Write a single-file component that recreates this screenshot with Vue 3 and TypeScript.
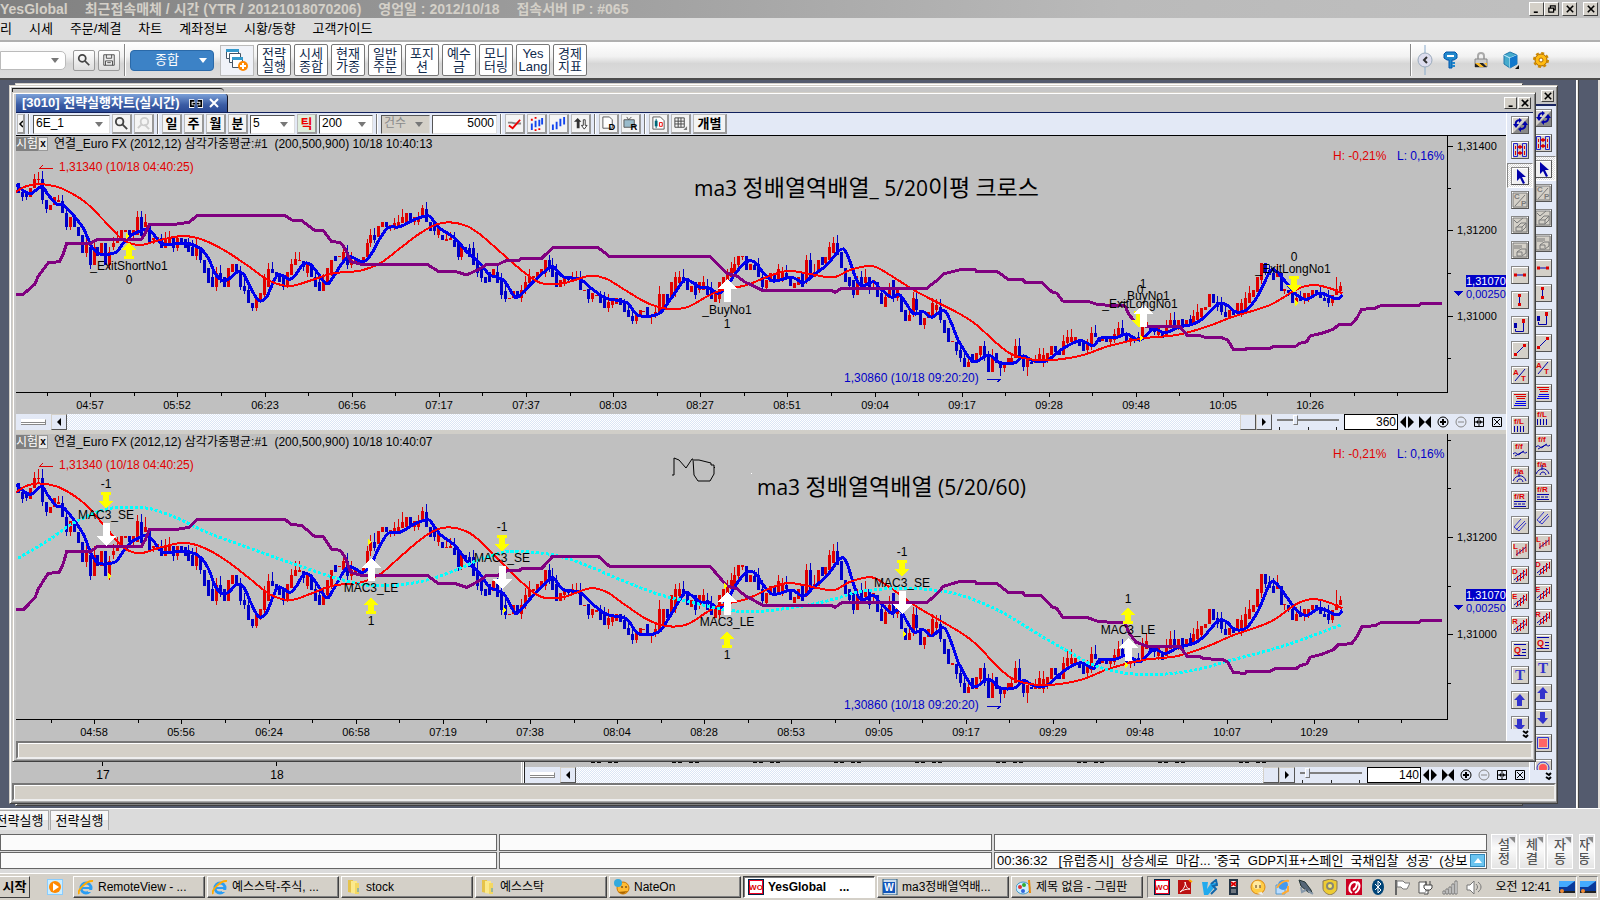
<script setup lang="ts">
import { ref } from 'vue'

type Pt = [number, number]

/* Traces are stored in thirds of a pixel, one row per 480px sheet of the chart. */
const SHEET = 1440
function trace(...sheets: string[]): Pt[] {
  const out: Pt[] = []
  sheets.forEach((s, n) => {
    for (const pair of s.trim().split(/\s+/)) {
      const [x, y] = pair.split(',').map(Number)
      out.push([x + n * SHEET, y])
    }
  })
  return out
}

const fast = trace(
  '48,315 75,335 95,340 125,320 145,345 170,372 190,375 215,400 250,445 275,500 300,522 345,518 370,490 395,465 415,455 440,447 460,462 490,492 560,490 600,505 625,535 645,580 665,600 685,598 710,577 730,582 750,620 770,655 782,663 800,650 830,588 850,588 870,598 890,580 910,552 930,552 950,575 980,612 1000,590 1030,545 1050,530 1090,545 1115,520 1140,475 1165,443 1200,440 1240,420 1275,408 1290,410 1320,445 1365,475 1400,515 1430,540',
  '5,555 30,585 70,600 100,645 115,650 160,605 200,570 220,560 250,590 300,598 340,630 380,655 440,668 475,706 535,702 570,660 610,603 630,603 660,622 690,625 715,640 740,620 770,575 800,545 825,547 850,578 880,603 935,592 970,608 1000,585 1040,555 1080,510 1100,520 1130,600 1150,617 1180,605 1200,625 1235,652 1260,645 1300,700 1330,695 1355,712 1390,690 1410,720 1430,770',
  '0,790 40,845 85,825 120,848 165,848 190,828 220,842 260,842 310,805 360,782 400,797 420,775 470,772 500,762 540,780 580,747 615,758 655,742 700,732 730,715 775,672 800,675 825,695 860,690 895,645 930,575 950,575 980,610 1010,645 1040,658 1080,640 1130,657 1147,645',
)
const slow = trace(
  '48,335 75,320 115,312 170,320 215,340 260,370 320,430 370,480 420,495 480,480 550,468 610,480 680,515 750,562 810,603 870,618 930,602 1000,580 1080,572 1140,550 1200,505 1260,460 1310,433 1350,427 1400,438',
  '0,463 60,515 130,575 185,610 250,610 330,587 380,597 430,627 500,668 560,686 620,682 680,650 720,632 800,615 870,587 925,573 990,582 1060,592 1110,570 1175,558 1230,585 1310,635',
  '0,702 50,735 110,790 160,825 230,840 300,838 370,825 450,797 550,775 650,765 740,740 820,710 930,675 1010,628 1060,615 1110,625 1147,640',
)
const band = trace(
  '48,643 70,643 105,612 115,588 145,548 178,545 190,522 200,490 272,490 292,478 424,478 436,460 448,433 525,433 568,427 590,407 856,407 875,420 905,422 945,452 970,452 995,485 1020,487 1035,505 1052,545 1080,552 1280,552 1315,574 1365,574 1400,585',
  '0,566 20,553 55,553 80,541 118,541 125,535 185,535 218,503 355,503 388,529 690,529 740,580 770,588 795,606 850,632 1055,632 1065,637 1085,625 1340,625 1375,598 1390,582',
  '0,569 45,569 50,575 112,575 145,598 188,598 195,607 245,607 275,635 290,640 308,663 380,663 415,674 495,678 508,705 528,728 565,740 660,740 682,766 720,767 735,772 785,773 803,780 820,808 855,810 860,805 930,805 945,798 1008,798 1020,790 1040,785 1050,768 1085,760 1120,748 1135,735 1175,732 1190,715 1205,688 1245,685 1262,677 1375,677 1385,670 1447,670',
)
const long60 = trace(
  '55,415 100,388 150,358 215,312 290,277 345,263 430,263 480,275 540,298 620,337 720,374 830,414 900,438 1000,472 1080,492 1140,498 1220,492 1300,475 1380,445',
  '0,418 60,400 100,394 190,400 260,415 330,440 440,487 540,524 640,548 740,570 820,575 900,568 990,554 1060,538 1130,517 1200,508 1280,505 1360,510',
  '0,525 80,555 150,590 230,640 320,692 400,735 480,757 560,764 640,760 720,747 800,724 900,698 1000,668 1147,613',
)

/* Candle bodies: direction, top, bottom. */
const bodies = `b310,338 b335,352 b335,350 r325,352 r297,325 r297,300 b297,360 b360,388 r375,390 r350,375 r360,365 b362,400 b400,440 r410,440 b415,440 b440,468 b465,518 r490,518 b500,555 r500,555 b500,528 r488,528 b490,555 r515,555 r490,500 r475,490 r450,475 r450,455 b450,465 r450,465 r410,465 b412,468 r425,440 b438,490 r475,480 r470,478 b475,503 r475,503 r475,490 b475,503 r475,503 b475,490 b478,503 b490,515 b500,528 r502,528 b502,540 b540,580 b565,608 b590,620 r578,620 b578,600 b590,620 r565,620 r552,575 b552,580 b575,620 b618,632 b630,670 b668,685 r655,685 r640,657 r595,645 r567,620 b567,580 b575,585 b580,605 b590,620 r575,615 r553,585 r538,555 r540,543 b542,560 r550,580 b555,592 b590,620 b605,632 r605,632 r565,605 r540,580 b527,543 r528,530 r515,540 b515,555 r540,555 r540,550 b540,553 r530,545 r490,530 r465,490 b465,480 r437,470 r427,440 b425,440 r435,440 r430,440 r425,440 r412,430 r400,425 b400,425 r410,425 r410,425 r385,410 b388,425 b425,452 b425,452 r440,465 b465,480 r478,482 r475,480 b480,500 b490,530 r500,530 b500,515 b505,530 b505,555 b540,580
b565,595 b590,608 b575,605 r567,595 b575,610 b600,645 b632,658 r655,658 r632,655 b632,650 r630,655 r605,632 r590,610 r588,595 r577,595 r567,585 r540,580 b540,568 b555,592 b575,620 r600,620 r590,605 b590,600 r590,600 r592,600 b595,630 r630,632 b628,657 r640,657 r645,648 b648,670 b655,683 r665,683 r660,675 r655,672 b655,675 b670,695 b690,710 b707,722 r705,722 r690,710 r693,697 b680,705 r706,710 r695,705 r642,700 r642,680 b642,665 r605,655 r590,640 r590,608 b590,608 b595,630 r618,635 b605,645 r605,630 r605,630 b618,645 b630,657 r640,665 r605,657 r590,620 r580,600 r565,590 r553,580 r527,555 r527,530 b528,570 r553,570 b555,570 b553,592 b590,620 r600,625 r580,605 b580,605 r567,605 r578,595 b578,590 b592,617 r610,625 r590,615 b580,620 r540,600 b540,590 r575,590 r540,580 b530,555 r530,550 r500,540 r490,520 b490,525 b515,565 b565,605 b590,618 b600,645 r605,645 b592,620 r592,610 b590,630 r600,610 b605,650 b640,672 r650,680 r630,655 b600,655 r630,655 b655,695 b690,722 r705,722 r655,700 b657,690 b690,735 r715,735 r695,715 r668,710 r675,690 b680,720 b720,760 b745,785 r783,787 b785,812
b810,835 b835,862 r845,862 b822,850 r820,850 r797,825 b797,835 b830,875 r830,875 b820,850 b845,865 r850,865 r835,850 r835,850 r797,835 b797,840 b835,862 r840,862 b845,852 r840,850 r822,850 r825,850 r820,840 r797,825 b797,815 b810,825 r782,825 r770,790 r770,785 r770,785 b782,797 b785,812 r790,810 r760,800 b758,772 b770,785 r770,782 b772,785 r770,785 r762,780 r745,770 b745,765 b762,785 r775,785 b770,780 b770,782 r735,775 r725,745 b735,750 b735,755 r740,765 b755,775 r735,765 r720,745 b720,740 r720,740 b718,745 r720,740 b718,735 r708,735 r695,720 r685,710 r680,690 r642,680 b642,670 b665,680 b670,695 b695,710 r690,710 b690,705 r668,695 r670,700 r655,690 r640,668 r630,650 r590,635 r550,600 b550,575 b570,585 b580,600 r575,590 b580,632 r628,632 b630,640 b640,670 r655,672 b655,662 r640,660 r640,655 r630,645 b630,640 b635,655 b655,662 b655,670 r645,670 r628,645 r618,632`

const wickFix: Record<number, Pt> = {
  5: [275, 310], 18: [500, 566], 59: [668, 692], 60: [655, 692], 70: [516, 555], 102: [375, 410],
  160: [706, 731], 207: [466, 525], 229: [715, 746], 248: [845, 887], 255: [840, 887], 334: [606, 632], 333: [591, 645],
}
const candles = bodies.trim().split(/\s+/).map((t, i) => {
  const [top, bottom] = t.slice(1).split(',').map(Number)
  const up = (i * 7919) % 13
  const down = (i * 104729) % 11
  const fix = wickFix[i]
  return {
    up: t[0] === 'r', x: 55 + i * 11.87, top, bottom,
    high: fix ? fix[0] : top - (up > 6 ? up * 2 : 0),
    low: fix ? fix[1] : bottom + (down > 6 ? down + 2 : 0),
  }
})

interface Signal { kind: 'up' | 'down' | 'buy' | 'sell' | 'mark'; x: number; y: number }
interface Note { x: number; y: number; s: string }
interface Chart {
  id: number; top: number; height: number; base: number; axis: number; scale: number; stamp: string; tick0: number
  times: string[]; prices: [number, string][]; badge: number; hl: number; high: number; low: number
  signals: Signal[]; notes: Note[]; dotted: boolean
}

const charts: Chart[] = [
  {
    id: 1, top: 136, height: 278, base: 80, axis: 392, scale: 1, stamp: '10:40:13', tick0: 271, dotted: false,
    times: ['04:57', '05:52', '06:23', '06:56', '07:17', '07:37', '08:03', '08:27', '08:51', '09:04', '09:17', '09:28', '09:48', '10:05', '10:26'],
    prices: [[146, '1,31400'], [188, ''], [230, '1,31200'], [273, ''], [316, '1,31000'], [358, '']],
    badge: 275, hl: 160, high: 168, low: 379,
    signals: [
      { kind: 'up', x: 129, y: 242 }, { kind: 'buy', x: 727, y: 279 },
      { kind: 'down', x: 1139, y: 311 }, { kind: 'buy', x: 1143, y: 304 },
      { kind: 'down', x: 1294, y: 276 }, { kind: 'mark', x: 1296, y: 303 }, { kind: 'mark', x: 127, y: 236 }, { kind: 'mark', x: 1141, y: 338 },
    ],
    notes: [
      { x: 129, y: 270, s: '_ExitShortNo1' }, { x: 129, y: 284, s: '0' },
      { x: 727, y: 314, s: '_BuyNo1' }, { x: 727, y: 328, s: '1' },
      { x: 1143, y: 288, s: '1' }, { x: 1140, y: 294, s: '0' }, { x: 1145, y: 300, s: '_BuyNo1' }, { x: 1140, y: 308, s: '_ExitLongNo1' },
      { x: 1294, y: 261, s: '0' }, { x: 1293, y: 273, s: '_ExitLongNo1' },
    ],
  },
  {
    id: 2, top: 434, height: 307, base: 420, axis: 719, scale: 1.144, stamp: '10:40:07', tick0: 283, dotted: true,
    times: ['04:58', '05:56', '06:24', '06:58', '07:19', '07:38', '08:04', '08:28', '08:53', '09:05', '09:17', '09:29', '09:48', '10:07', '10:29'],
    prices: [[440, ''], [488, ''], [537, '1,31200'], [586, ''], [634, '1,31000'], [683, '']],
    badge: 589, hl: 458, high: 466, low: 706,
    signals: [
      { kind: 'down', x: 106, y: 492 }, { kind: 'sell', x: 106, y: 523 }, { kind: 'mark', x: 109, y: 576 },
      { kind: 'buy', x: 371, y: 558 }, { kind: 'up', x: 371, y: 597 }, { kind: 'mark', x: 369, y: 542 },
      { kind: 'down', x: 502, y: 535 }, { kind: 'sell', x: 502, y: 566 }, { kind: 'mark', x: 504, y: 610 },
      { kind: 'buy', x: 727, y: 592 }, { kind: 'up', x: 727, y: 631 }, { kind: 'mark', x: 725, y: 586 },
      { kind: 'down', x: 902, y: 560 }, { kind: 'sell', x: 902, y: 591 }, { kind: 'mark', x: 904, y: 634 },
      { kind: 'up', x: 1128, y: 607 }, { kind: 'buy', x: 1128, y: 638 }, { kind: 'mark', x: 1126, y: 665 },
    ],
    notes: [
      { x: 106, y: 488, s: '-1' }, { x: 106, y: 519, s: 'MAC3_SE' },
      { x: 371, y: 592, s: 'MAC3_LE' }, { x: 371, y: 625, s: '1' },
      { x: 502, y: 531, s: '-1' }, { x: 502, y: 562, s: 'MAC3_SE' },
      { x: 727, y: 626, s: 'MAC3_LE' }, { x: 727, y: 659, s: '1' },
      { x: 902, y: 556, s: '-1' }, { x: 902, y: 587, s: 'MAC3_SE' },
      { x: 1128, y: 603, s: '1' }, { x: 1128, y: 634, s: 'MAC3_LE' },
    ],
  },
]

const shapes: Record<Signal['kind'], string> = {
  up: 'M0 0l7 8h-4v6h2v3h-10v-3h2v-6h-4z',
  down: 'M0 17l7-8h-4v-6h2v-3h-10v3h2v6h-4z',
  buy: 'M0 0l10 10h-6v13h-7v-13h-6z',
  sell: 'M0 23l10-10h-6v-13h-7v13h-6z',
  mark: 'M-1 -3l4 3l-4 3z',
}

const py = (c: Chart, y: number) => (c.scale === 1 ? c.base + y / 3 : c.base + (148 + (y - 275) * c.scale) / 3)
const r1 = (n: number) => Math.round(n * 10) / 10
function place(c: Chart, pts: Pt[]): Pt[] {
  return pts.map(([x, y]) => [x / 3, py(c, y)])
}
const straight = (pts: Pt[]) => 'M' + pts.map(([x, y]) => `${r1(x)} ${r1(y)}`).join('L')
function smooth(p: Pt[]): string {
  let d = `M${r1(p[0][0])} ${r1(p[0][1])}`
  for (let i = 0; i < p.length - 1; i++) {
    const a = p[Math.max(0, i - 1)], b = p[i], c = p[i + 1], e = p[Math.min(p.length - 1, i + 2)]
    d += `C${r1(b[0] + (c[0] - a[0]) / 6)} ${r1(b[1] + (c[1] - a[1]) / 6)} ${r1(c[0] - (e[0] - b[0]) / 6)} ${r1(c[1] - (e[1] - b[1]) / 6)} ${r1(c[0])} ${r1(c[1])}`
  }
  return d
}
function bars(c: Chart, up: boolean): string {
  return candles.filter((k) => k.up === up).map((k) => {
    const x = Math.round(k.x / 3), t = Math.round(py(c, k.top)), b = Math.max(t + 1, Math.round(py(c, k.bottom)))
    return `M${x - 1} ${t}h3v${b - t}h-3zM${x} ${Math.round(py(c, k.high))}h1V${Math.round(py(c, k.low))}h-1z`
  }).join('')
}
function ticks(c: Chart): string {
  let d = ''
  for (let i = -1; i < 31; i++) {
    const x = Math.round((c.tick0 + i * 130.7) / 3)
    if (x < 1440) d += `M${x} ${c.axis}h1v${i % 2 === 0 && i < 29 ? 5 : 4}h-1z`
  }
  return d
}
const sixty = smooth(long60.map(([x, y]) => [x / 3, 420 + y / 3] as Pt))

const R = '#d00', B = '#00a', G = '#7a7a7a'
const tx = (x: number, y: number, s: string, c: string, z = 8) =>
  `<text x="${x}" y="${y}" fill="${c}" font-size="${z}" font-weight="700">${s}</text>`
const ln = (d: string, c: string, w = 1) => `<path d="${d}" fill="none" stroke="${c}" stroke-width="${w}"/>`
const fl = (d: string, c: string) => `<path d="${d}" fill="${c}"/>`
const hatch = (s: string) => ln('M2 13l11-9M4 15l11-9', B) + ln('M5.500 14v-5M8.500 14v-8M11.500 12v-9M14.500 9v-7', R) + tx(0, 7, s, R, 8)

const tools: { name: string; art: string; on?: boolean }[] = [
  { name: '새로고침', art: fl('M16 1v15H1z', '#888') + ln('M4 8c-1-3 1-5 4-5M9 12c3 0 5-2 4-5', B, 2) + fl('M1 7h6l-3 4zM10 8h6l-3-4zM7 1v5l3-3zM9 10v5l-3-3z', B) },
  { name: '블록', art: ln('M1.5 1.5h4v13h-4zM10.500 1.5h4v13h-4z', '#22c') + ln('M3.500 4v3M3.500 9v4M12.500 4v3M12.500 9v4', R) + fl('M5 5l3-2v4zM11 5l-3-2v4zM5 11l3-2v4zM11 11l-3-2v4z', R) },
  { name: '선택', art: fl('M5 1v12l3-3l3 6l2-1l-3-6h4z', B), on: true },
  { name: '복사', art: ln('M1 1h14v14h-14z', G) + tx(2, 7, 'C', G, 8) + tx(9, 14, 'P', G, 8) + ln('M3 14l10-11', G) },
  { name: '선택 삭제', art: ln('M1 1h14v14h-14z', G) + ln('M2 3l3 3l6-5M5 10l4-4h5v4l-4 4h-6v-4h6v4M10 10l4-4', G) },
  { name: '전체 삭제', art: ln('M1 1h14v14h-14z', G) + ln('M3 3v4M5 3v4M7 3v4M9 3v3M5 10l4-3h5v4l-4 3h-5v-4h5v3', G) },
  { name: '수평선', art: ln('M4 8h8', B) + fl('M2 6.500h3v3h-3zM11 6.500h3v3h-3z', R) },
  { name: '수직선', art: ln('M7.500 4v8', B) + fl('M6 2h3v3h-3zM6 11h3v3h-3z', R) },
  { name: '직각선', art: ln('M3.500 12v2.500h8v-12', B) + fl('M2 6h3v5h-3z', B) + fl('M10 2h3v4h-3z', R) },
  { name: '추세선', art: ln('M4 12l8-8', B) + fl('M2 11h3v3h-3zM11 2h3v3h-3z', R) },
  { name: '각도선', art: ln('M3 14l10-12', B) + tx(1, 8, 'A', R, 8) + tx(9, 14, 'T', R, 8) },
  { name: '되돌림', art: ln('M2 2.500h12M4 4.500h10M5 6.500h8', R) + ln('M4 9.500h10M3 11.500h11M2 13.500h12', '#00e') },
  { name: '피보나치선', art: tx(2, 7, 'f/L', R, 8) + ln('M2.500 9v6M5.500 9v6M8.500 9v6M11.500 9v6', B) },
  { name: '피보나치팬', art: tx(3, 7, 'f/f', R, 8) + ln('M1 12c4-4 4 4 8-1c3-3 3 2 6-1M3 14l9-5', B) },
  { name: '피보나치원', art: tx(2, 7, 'f/a', R, 8) + ln('M1 14c3-7 11-7 13 0M5 15c1-4 5-4 6 0M7 5v5', B) },
  { name: '피보나치구간', art: tx(2, 7, 'f/R', R, 8) + ln('M2 9.500h12M2 14.500h12', B) + '<path d="M2 12h12" stroke="#00a" stroke-dasharray="3 1"/>' },
  { name: '평행선', art: ln('M2 10l7-8M4 13l9-9M7 14l7-8M2 10l5 4', '#33c') },
  { name: '회귀선', art: tx(1, 7, 'L', R, 8) + ln('M4 13l10-8', B) + ln('M5 14v-6M8 12v-5M11 11v-6M14 10v-8', R) },
  { name: '회귀 D', art: hatch('D') },
  { name: '회귀 E', art: hatch('E') },
  { name: '회귀 R', art: hatch('R') },
  { name: '사분선', art: ln('M2 2.500h12M2 13.500h12M10 7.500h4M10 10.500h4', B) + tx(2, 11, 'Q', R, 9) },
  { name: '문자', art: '<text x="8" y="13" text-anchor="middle" fill="#33c" style="font-family:Liberation Serif" font-size="15" font-weight="700">T</text>' },
  { name: '위 화살표', art: fl('M8 2l5 6h-3v6h-5v-6h-3z', '#33c') },
  { name: '아래 화살표', art: fl('M8 14l5-6h-3v-6h-5v6h-3z', '#33c') },
  { name: '사각형', art: '<path d="M2.500 2.500h11v11h-11z" fill="none" stroke="#33c"/><path d="M4 4h8v8h-8z" fill="#f66"/>' },
  { name: '원', art: '<circle cx="8" cy="8" r="6" fill="none" stroke="#33c"/><circle cx="8" cy="8" r="4" fill="#f55"/>' },
]

const art: Record<string, string> = {
  glass: '<circle cx="6" cy="6" r="4" fill="none" stroke="#444" stroke-width="2"/><path d="M9 9l5 5" stroke="#444" stroke-width="2"/>',
  glassOff: '<circle cx="9" cy="6" r="4" fill="none" stroke="#ccc" stroke-width="2"/><path d="M6 9l-4 4M9 9l5 5" stroke="#ccc" stroke-width="2"/>',
  save: '<path d="M2 2h12v12h-12z" fill="#eee" stroke="#444"/><path d="M5 2v4h6v-4M4 14v-5h8v5M6 11h4" fill="none" stroke="#444"/>',
  check: '<path d="M1 7h4l4 1h6" stroke="#888" fill="none" stroke-width="2"/><path d="M2 10l4 3l8-9" stroke="#e00" fill="none" stroke-width="2"/>',
  dots: '<path d="M3 15v-7M7 12v-7M11 11v-7M14 9v-7" stroke="#14e" stroke-width="2"/><path d="M2 3h2v2h-2zM6 1h2v2h-2zM6 14h2v2h-2zM10 13h2v2h-2z" fill="#e00"/>',
  steps: '<path d="M2 15v-6M6 14v-8M10 11v-8M14 9v-8" stroke="#14e" stroke-width="2"/>',
  updown: '<path d="M5 2l4 4h-2v7h-3v-7h-3z" fill="#333"/><path d="M12 14l3-4h-2v-6h-2v6h-2z" fill="#fff" stroke="#333"/>',
  docD: '<path d="M2 1h7l3 3v9h-10z" fill="#fff" stroke="#555"/><text x="8" y="15" font-size="10" font-weight="700">D</text>',
  tvR: '<path d="M1 4h11v8h-11z" fill="#9bc" stroke="#555"/><path d="M4 1l2 3l3-3" fill="none" stroke="#555"/><text x="8" y="15" font-size="10" font-weight="700">R</text>',
  docC: '<path d="M2 1h8l4 4v9h-12z" fill="#fff" stroke="#555"/><path d="M4 5h3v6h-3z" fill="#067"/><path d="M5.500 3v10" stroke="#067"/><path d="M9 7h3v4h-3z" fill="none" stroke="#e00"/>',
  grid: '<path d="M2 2h10v10h-10zM2 5.500h10M2 8.500h10M5.500 2v10M8.500 2v10" fill="none" stroke="#444"/><path d="M15 11v4h-4z" fill="#777"/>',
  windows: '<path d="M1.500 1.500h12v9h-12z" fill="#fff" stroke="#456"/><path d="M1 1h13v3h-13z" fill="#39c"/><path d="M4.500 5.500h11v9h-11z" fill="#fff" stroke="#456"/><path d="M7.500 9.500h10v10h-10z" fill="#fff" stroke="#456"/><path d="M7 9h11v3h-11z" fill="#39c"/><circle cx="18" cy="18" r="5" fill="#f80"/><path d="M18 15v6M15 18h6" stroke="#fff" stroke-width="2"/>',
  key: '<path d="M4 1h9l2 2v4l-3 2h-2v8h-3v-8h-2l-3-2v-4z" fill="#28c" stroke="#05a"/><path d="M5 4h7v2h-7z" fill="#fff"/><path d="M10 12h3M10 15h3" stroke="#28c" stroke-width="2"/>',
  lock: '<path d="M6 9v-4c0-4 6-4 6 0v4" fill="none" stroke="#aaa" stroke-width="2"/><path d="M3 8h12v8h-12z" fill="#ccc" stroke="#888"/><path d="M3 12l5 4h-5zM7 12h4l4 4h-4z" fill="#222"/><path d="M3 12h4l5 4h-4zM12 12h3v3z" fill="#fb2"/>',
  cube: '<path d="M2 4l6-3l7 3v9l-7 4l-6-4z" fill="#4ac" stroke="#27a"/><path d="M2 4l6 3l7-3M8 7v10" stroke="#cef" fill="none"/><path d="M8 7l7-3v9l-7 4z" fill="#17c"/><path d="M17 14v4h-4z" fill="#111"/>',
  gear: '<circle cx="9" cy="9" r="6" fill="#fb1" stroke="#a60"/><circle cx="9" cy="9" r="7" fill="none" stroke="#c80" stroke-width="2" stroke-dasharray="3 2.500"/><circle cx="9" cy="9" r="2" fill="#fff" stroke="#a60"/>',
  back: '<path d="M9 0v8M9 22v8" stroke="#8ac"/><circle cx="9" cy="15" r="7" fill="#dde" stroke="#9ab"/><path d="M11 12l-3 3l3 3" fill="none" stroke="#333" stroke-width="2"/>',
  wmp: '<path d="M0 0h16v16h-16z" fill="#8cf"/><path d="M1 1h14v14h-14z" fill="#cef"/><circle cx="8" cy="8" r="6" fill="#f80"/><path d="M6 4l6 4l-6 4z" fill="#fff"/>',
  ie: '<circle cx="8" cy="9" r="5" fill="none" stroke="#2a9df4" stroke-width="3"/><path d="M4 9h9" stroke="#2a9df4" stroke-width="2"/><path d="M10 11h6v2h-6z" fill="#d4d0c8"/><path d="M1 15c-2-4 8-14 14-13" fill="none" stroke="#fa0" stroke-width="2"/>',
  folder: '<path d="M2 1h5v13l-5-1z" fill="#e6c34a"/><path d="M5 2h6v13l-6-1z" fill="#fbe98c"/><path d="M9 4h4v11h-4z" fill="#f3d762"/><path d="M12 9v4" stroke="#49c"/>',
  nate: '<circle cx="9" cy="9" r="6" fill="#fb3" stroke="#c70"/><path d="M4 13l5 2l5-3z" fill="#a60"/><circle cx="4" cy="4" r="4" fill="#3ad"/><path d="M8 7v2M12 7v2" stroke="#421"/>',
  wo: '<path d="M0 0h16v16h-16z" fill="#024"/><path d="M1 1h14v14h-14z" fill="#e02"/><path d="M2 2h12v12h-12z" fill="#fff"/><text x="8" y="11" text-anchor="middle" font-size="8" font-weight="700" fill="#d00">WO</text>',
  word: '<path d="M1 0h14v16h-14z" fill="#cde" stroke="#257"/><path d="M1 3h12v11h-12z" fill="#15b"/><text x="7" y="12" text-anchor="middle" font-size="10" font-weight="700" fill="#fff">W</text>',
  paint: '<ellipse cx="7" cy="9" rx="7" ry="6" fill="#cef" stroke="#49c"/><circle cx="4" cy="8" r="2" fill="#d33"/><circle cx="8" cy="6" r="2" fill="#3a3"/><circle cx="7" cy="12" r="2" fill="#36d"/><path d="M13 1l1 13" stroke="#e80" stroke-width="2"/>',
  pdf: '<path d="M0 1h13v14h-13z" fill="#b11"/><path d="M2 13c4-3 6-7 5-10c1 5 3 7 5 7c-4 0-7 1-10 3" fill="none" stroke="#fff"/><path d="M11 1l3 2" stroke="#fa0" stroke-width="2"/>',
  v3: '<path d="M0 3h6l-1 7l4-6h7l-10 12h-4z" fill="#2ae"/><path d="M9 5l5-4l1 5l-4 1l3 3l-5 5" fill="none" stroke="#16a" stroke-width="2"/>',
  phone: '<path d="M3 0h9v16h-9z" fill="#234"/><path d="M5 2h5v6h-5z" fill="#fff"/><path d="M5 3l5 4M10 3l-5 4" stroke="#d00" stroke-width="2"/><path d="M5 11h5M5 13h5" stroke="#bbb"/>',
  face: '<circle cx="8" cy="8" r="7" fill="#fc4" stroke="#d81"/><circle cx="7" cy="6" r="4" fill="#ffe9a0"/><path d="M6 6v3M10 6v3" stroke="#531"/><path d="M7 14l5-1l1 3z" fill="#eee"/>',
  globe: '<path d="M2 6h9v9h-9z" fill="#bdf" stroke="#59c"/><circle cx="9" cy="6" r="5" fill="#49e"/><path d="M3 9c2-5 8-8 12-7M8 15l6-3v-5" fill="none" stroke="#fa3" stroke-width="2"/>',
  rocket: '<path d="M1 1l6 2l6 8l1 3l-4-1l-7-6z" fill="#567" stroke="#233"/><path d="M10 12l5 3M3 8l1 5l4-2" stroke="#89a" stroke-width="2" fill="none"/>',
  shield: '<path d="M1 2l7-2l7 2v7c0 4-4 6-7 7c-3-1-7-3-7-7z" fill="#ec3" stroke="#875"/><circle cx="8" cy="7" r="4" fill="#887"/><circle cx="8" cy="7" r="2" fill="#fe6"/>',
  swirl: '<path d="M0 0h16v16h-16z" fill="#c02"/><path d="M6 14c-5-3-2-11 3-11c3 0 2 6-2 8M11 3c4 2 3 8-2 11" stroke="#fff" stroke-width="2" fill="none"/>',
  bt: '<ellipse cx="8" cy="8" rx="6" ry="8" fill="#047"/><path d="M5 5l6 6l-3 3v-12l3 3l-6 6" fill="none" stroke="#fff"/>',
  flag: '<path d="M2 1v15" stroke="#666" stroke-width="2"/><path d="M3 2h6l2 2h5l-3 6h-4l-2-2h-4z" fill="#fff" stroke="#777"/>',
  plug: '<path d="M1 3h7v11h-7z" fill="#fff" stroke="#555"/><path d="M6 6h8v3l-2 2h-4l-2-2zM8 2v4M12 2v4M10 11v4h-4" fill="#fff" stroke="#444"/>',
  signal: '<path d="M1 12h2v3h-2zM4 10h2v5h-2zM7 8h2v7h-2zM10 5h2v10h-2zM13 2h2v13h-2z" fill="#fff" stroke="#777"/>',
  sound: '<path d="M1 6h3l4-4v13l-4-4h-3z" fill="#fff" stroke="#777"/><path d="M10 5c2 2 2 4 0 6M12 3c4 3 4 7 0 10" fill="none" stroke="#777"/>',
  desk: '<path d="M0 2h16v11h-16z" fill="#0a3a9a"/><path d="M0 2h16l-8 6h-8z" fill="#4af"/><path d="M0 12h16v2h-16z" fill="#222"/><circle cx="3" cy="12" r="2" fill="#e83"/>',
}

const menus = ['시세', '주문/체결', '차트', '계좌정보', '시황/동향', '고객가이드']
const quick = [['전략', '실행'], ['시세', '종합'], ['현재', '가종'], ['일반', '주문'], ['포지', '션'], ['예수', '금'], ['모니', '터링'], ['Yes', 'Lang'], ['경제', '지표']]
const sideIcons = [['key', '인증'], ['lock', '잠금'], ['cube', '보기'], ['gear', '설정']]
const units = ['일', '주', '월', '분']
const chartTools = [[['check', '추세'], ['dots', '지표'], ['steps', '봉'], ['updown', '정렬']], [['docD', '문서'], ['tvR', '실시간']], [['docC', '차트 문서'], ['grid', '격자']]]
const tasks = [
  ['ie', 'RemoteView - ...'], ['ie', '예스스탁-주식, ...'], ['folder', 'stock'], ['folder', '예스스탁'],
  ['nate', 'NateOn'], ['wo', 'YesGlobal    ...'], ['word', 'ma3정배열역배...'], ['paint', '제목 없음 - 그림판'],
]
const tray = ['wo', 'pdf', 'v3', 'phone', 'face', 'globe', 'rocket', 'shield', 'swirl', 'bt', 'flag', 'plug', 'signal', 'sound']
const sideTabs = [['설', '정'], ['체', '결'], ['자', '동']]
const zoomIcons = [
  ['넓게', '<path d="M7 2v12l-6-6zM9 2v12l6-6z" fill="#000"/>'],
  ['좁게', '<path d="M2 2v12l6-6zM14 2v12l-6-6z" fill="#000"/>'],
  ['확대', '<circle cx="8" cy="8" r="5" fill="none" stroke="#000"/><path d="M8 5v6M5 8h6" stroke="#000" stroke-width="2"/>'],
  ['축소', '<circle cx="8" cy="8" r="5" fill="none" stroke="#888"/><path d="M5 8h6" stroke="#888"/>'],
  ['맞춤', '<path d="M3.500 3.500h9v9h-9zM8 3v10M3 8h10" fill="none" stroke="#000"/><path d="M5 8l2-2v4zM11 8l-2-2v4z"/>'],
  ['닫기', '<path d="M3.500 3.500h9v9h-9zM5 5l6 6M11 5l-6 6" fill="none" stroke="#000"/>'],
]
const bars1 = ref('360')
const bars2 = ref('140')
const symbol = ref('6E_1')
const count = ref('5000')
</script>

<template>
  <div class="app">
    <header class="title">
      <div class="caption"><strong>YesGlobal</strong><strong>최근접속매체 / 시간 (YTR / 20121018070206)</strong><strong>영업일 : 2012/10/18</strong><strong>접속서버 IP : #065</strong></div>
      <span class="grow"></span>
      <button class="cap" aria-label="최소화"><svg viewBox="0 0 10 10"><path d="M1 8h5v2h-5z" /></svg></button>
      <button class="cap" aria-label="복원"><svg viewBox="0 0 10 10"><path d="M3 3v-2h6v5h-2M1 4h6v5h-6z" fill="none" stroke="#000" stroke-width="1.500" /></svg></button>
      <button class="cap gap" aria-label="닫기"><svg viewBox="0 0 10 10"><path d="M1 1l8 8M9 1l-8 8" stroke="#000" stroke-width="2" /></svg></button>
      <button class="cap far" aria-label="창 닫기"><svg viewBox="0 0 10 10"><path d="M1 1l8 8M9 1l-8 8" stroke="#000" stroke-width="2" /></svg></button>
    </header>

    <nav class="menu"><a href="#">리</a><a v-for="m in menus" :key="m" href="#">{{ m }}</a></nav>

    <div class="main-tools">
      <span class="pick find"><select aria-label="화면 찾기"><option></option></select><svg viewBox="0 0 8 5"><path d="M0 0h8l-4 5z" /></svg></span>
      <button class="sq" aria-label="찾기"><svg viewBox="0 0 16 16" v-html="art.glass"></svg></button>
      <button class="sq" aria-label="저장"><svg viewBox="0 0 16 16" v-html="art.save"></svg></button>
      <i class="bar"></i>
      <button class="all">종합<svg viewBox="0 0 8 5"><path d="M0 0h8l-4 5z" fill="#fff" /></svg></button>
      <button class="new" aria-label="새 창"><svg viewBox="0 0 24 24" v-html="art.windows"></svg></button>
      <button v-for="q in quick" :key="q[0]" class="quick">{{ q[0] }}<br />{{ q[1] }}</button>
      <span class="grow"></span>
      <i class="bar"></i>
      <button class="ghost back" aria-label="접기"><svg viewBox="0 0 18 30" v-html="art.back"></svg></button>
      <button v-for="s in sideIcons" :key="s[0]" class="ghost" :aria-label="s[1]"><svg viewBox="0 0 18 18" v-html="art[s[0]]"></svg></button>
    </div>

    <main class="desk">
      <div class="seam"></div>
      <div class="win rear"></div>

      <section class="win mid">
        <div class="mid-head"><span class="mid-tab"></span><span class="grow"></span><button class="cap" aria-label="뒤 창 닫기"><svg viewBox="0 0 10 10"><path d="M1 1l8 8M9 1l-8 8" stroke="#000" stroke-width="2" /></svg></button></div>
        <div class="mid-body">
          <div class="mid-main">
            <div class="strip">
              <div class="days">
                <svg viewBox="0 0 508 21"><path d="M90 0h1v4h-1zM264 0h1v4h-1z" /><text x="91" y="17">17</text><text x="265" y="17">18</text></svg>
              </div>
              <div class="strip-r">
                <div class="clip"><svg viewBox="0 0 1000 5" preserveAspectRatio="xMinYMin meet" shape-rendering="crispEdges"><path v-for="n in 9" :key="n" :d="`M${n * 81 - 15} 0h4v1h-4zm6 0h4v1h-4zm11 0h4v1h-4zm6 0h4v1h-4z`" /></svg></div>
                <div class="scroll">
                  <i class="grip"></i><button class="arr" aria-label="왼쪽"><svg viewBox="0 0 8 8"><path d="M6 0v8l-4-4z" /></svg></button>
                  <div class="track"></div><i class="arr"></i><button class="arr" aria-label="오른쪽"><svg viewBox="0 0 8 8"><path d="M2 0v8l4-4z" /></svg></button>
                  <span class="slide"><input type="range" value="8" aria-label="뒤 차트 봉 폭" /></span>
                  <input v-model="bars2" class="num" aria-label="뒤 차트 봉 수" />
                  <button v-for="z in zoomIcons" :key="z[0]" class="zi" :aria-label="z[0]"><svg viewBox="0 0 16 16" v-html="z[1]"></svg></button>
                </div>
              </div>
            </div>
          </div>
          <aside class="rail back-rail">
            <div class="cells"><span v-for="t in tools" :key="t.name" class="cell" :class="{ on: t.on }"><button :aria-label="t.name"><svg viewBox="0 0 16 16" v-html="t.art"></svg></button></span></div>
            <div class="more"><svg viewBox="0 0 7 9"><path d="M1 1l3 2l2-2M1 5l3 2l2-2" fill="none" stroke="#000" stroke-width="2" /></svg></div>
          </aside>
        </div>
        <div class="status"></div>
      </section>

      <section class="win front">
        <div class="tabs">
          <span class="tab">[3010] 전략실행차트(실시간)<svg class="link" viewBox="0 0 16 10"><path d="M6 2h-4v6h4M10 2h4v6h-4M4 5h3M9 5h3" fill="none" stroke="#fff" stroke-width="4" /><path d="M6 2h-4v6h4M10 2h4v6h-4M4 5h3M9 5h3" fill="none" stroke="#000" stroke-width="2" /></svg><button aria-label="탭 닫기"><svg viewBox="0 0 10 10"><path d="M1 1l8 8M9 1l-8 8" stroke="#fff" stroke-width="2" /></svg></button></span>
          <span class="grow"></span>
          <button class="cap" aria-label="창 최소화"><svg viewBox="0 0 10 10"><path d="M2 8h5v2h-5z" /></svg></button>
          <button class="cap" aria-label="차트 창 닫기"><svg viewBox="0 0 10 10"><path d="M1 1l8 8M9 1l-8 8" stroke="#000" stroke-width="2" /></svg></button>
        </div>

        <div class="work">
          <div class="col">
            <div class="ctools">
              <button class="b thin" aria-label="이전"><svg viewBox="0 0 6 10"><path d="M5 2l-3 3l3 3" fill="none" stroke="#000" stroke-width="1.500" /></svg></button><i class="sep"></i>
              <span class="pick w-sym"><select v-model="symbol" aria-label="종목"><option>6E_1</option></select><svg viewBox="0 0 8 5"><path d="M0 0h8l-4 5z" /></svg></span>
              <button class="b" aria-label="종목 찾기"><svg viewBox="0 0 16 16" v-html="art.glass"></svg></button>
              <button class="b" aria-label="찾기 해제" disabled><svg viewBox="0 0 16 16" v-html="art.glassOff"></svg></button>
              <i class="sep"></i>
              <button v-for="u in units" :key="u" class="b">{{ u }}</button>
              <span class="pick w-min"><select aria-label="분 단위"><option>5</option></select><svg viewBox="0 0 8 5"><path d="M0 0h8l-4 5z" /></svg></span>
              <button class="b red">틱</button>
              <span class="pick w-tick"><select aria-label="틱 단위"><option>200</option></select><svg viewBox="0 0 8 5"><path d="M0 0h8l-4 5z" /></svg></span>
              <i class="sep"></i>
              <span class="pick w-cnt off"><select aria-label="조회 기준" disabled><option>건수</option></select><svg viewBox="0 0 8 5"><path d="M0 0h8l-4 5z" /></svg></span>
              <input v-model="count" class="cnt" aria-label="건수" />
              <template v-for="(g, gi) in chartTools" :key="gi">
                <i class="sep"></i>
                <button v-for="t in g" :key="t[0]" class="b" :aria-label="t[1]"><svg viewBox="0 0 16 16" v-html="art[t[0]]"></svg></button>
              </template>
              <button class="b wide">개별</button>
            </div>

            <template v-for="c in charts" :key="c.id">
              <figure class="pane">
                <svg class="plot" :viewBox="`16 ${c.top} 1490 ${c.height}`" role="img" :aria-label="`Euro FX ${c.stamp}`">
                  <g shape-rendering="crispEdges">
                    <path :d="`M16 ${c.axis}H1447V${c.top}h1V${c.axis + 1}H16z`" />
                    <path :d="ticks(c)" />
                    <path v-for="p in c.prices" :key="p[0]" :d="`M1448 ${p[0]}h${p[1] ? 5 : 3}v1h-${p[1] ? 5 : 3}z`" />
                    <path :d="bars(c, true)" fill="#e00000" />
                    <path :d="bars(c, false)" fill="#0000c8" />
                    <path :d="smooth(place(c, fast))" fill="none" stroke="#0000f0" stroke-width="3" />
                    <path :d="smooth(place(c, slow))" fill="none" stroke="#f00" stroke-width="2" />
                    <path v-if="c.dotted" :d="sixty" fill="none" stroke="#0ff" stroke-width="3" stroke-dasharray="3 2" />
                    <path :d="straight(place(c, band))" fill="none" stroke="#800080" stroke-width="3" stroke-linejoin="round" />
                    <path v-for="(s, i) in c.signals" :key="i" :d="shapes[s.kind]" :transform="`translate(${s.x} ${s.y})`" :fill="s.kind === 'buy' || s.kind === 'sell' ? '#fff' : '#ff0'" />
                    <path :d="`M39 ${c.high}h14v1h-14zM39 ${c.high}l3-3h1l-2 3z`" fill="#e00000" />
                    <path :d="`M987 ${c.low}h14v1h-14zM1001 ${c.low}l-3 3h-1l2-3z`" fill="#0000c8" />
                    <path :d="`M1466 ${c.badge}h40v12h-40z`" fill="#0000c8" />
                    <path :d="`M1454 ${c.badge + 16}h9l-4 5h-1z`" fill="#0000c8" />
                  </g>
                  <text v-for="(n, i) in c.notes" :key="i" :x="n.x" :y="n.y" class="mid-t">{{ n.s }}</text>
                  <text v-for="(t, i) in c.times" :key="t" :x="Math.round((c.tick0 + i * 261.4) / 3)" :y="c.axis + 17" class="mid-t ax">{{ t }}</text>
                  <template v-for="p in c.prices" :key="p[0]"><text v-if="p[1]" x="1457" :y="p[0] + 4" class="ax">{{ p[1] }}</text></template>
                  <text x="1466" :y="c.badge + 10" class="ax" fill="#fff">1,31070</text>
                  <text x="1466" :y="c.badge + 23" class="ax" fill="#0000c8">0,00250</text>
                  <text x="1333" :y="c.hl" fill="#e00000">H: -0,21%</text>
                  <text x="1397" :y="c.hl" fill="#0000c8">L: 0,16%</text>
                  <text x="59" :y="c.high + 3" fill="#e00000">1,31340 (10/18 04:40:25)</text>
                  <text x="844" :y="c.low + 3" fill="#0000c8">1,30860 (10/18 09:20:20)</text>
                  <text v-if="c.id === 1" x="694" y="196" class="big">ma3 <tspan class="ko">정배열역배열</tspan>_ 5/20<tspan class="ko">이평 크로스</tspan></text>
                  <template v-else>
                    <text x="757" y="495" class="big">ma3 <tspan class="ko">정배열역배열</tspan> (5/20/60)</text>
                    <path d="M672 475h2V458l5 2l7 8l6-9h1l1 16l4 6h12l4-7v-7l1 1m-1-1v-2h-3v-2l-12-3h-5" fill="none" stroke="#000" />
                    <path d="M751 473h1v1h-1z" fill="#fff" />
                  </template>
                </svg>
                <figcaption><em>시험</em><button aria-label="차트 닫기">x</button><span>연결_Euro FX (2012,12) 삼각가중평균:#1&nbsp; (200,500,900) 10/18 {{ c.stamp }}</span></figcaption>
              </figure>
              <div v-if="c.id === 1" class="scroll split">
                <i class="grip"></i><button class="arr" aria-label="왼쪽으로"><svg viewBox="0 0 8 8"><path d="M6 0v8l-4-4z" /></svg></button>
                <div class="track"></div><i class="arr"></i><button class="arr" aria-label="오른쪽으로"><svg viewBox="0 0 8 8"><path d="M2 0v8l4-4z" /></svg></button>
                <span class="slide"><input type="range" value="28" aria-label="봉 폭" /></span>
                <input v-model="bars1" class="num" aria-label="봉 수" />
                <button v-for="z in zoomIcons" :key="z[0]" class="zi" :aria-label="z[0]"><svg viewBox="0 0 16 16" v-html="z[1]"></svg></button>
              </div>
            </template>
          </div>
          <aside class="rail">
            <div class="cells"><span v-for="t in tools.slice(0, 25)" :key="t.name" class="cell" :class="{ on: t.on }"><button :aria-label="t.name"><svg viewBox="0 0 16 16" v-html="t.art"></svg></button></span></div>
            <div class="more"><svg viewBox="0 0 7 9"><path d="M1 1l3 2l2-2M1 5l3 2l2-2" fill="none" stroke="#000" stroke-width="2" /></svg></div>
          </aside>
        </div>
        <div class="status"></div>
      </section>
    </main>

    <div class="sheets"><button class="first">전략실행</button><button>전략실행</button></div>

    <div class="foot">
      <div class="boxes">
        <div></div><div></div><div></div>
        <div></div><div></div>
        <div class="news"><span>00:36:32&nbsp; &nbsp;[유럽증시]&nbsp; 상승세로&nbsp; 마감...&nbsp;'중국&nbsp; GDP지표+스페인&nbsp; 국채입찰&nbsp; 성공'&nbsp; (상보</span><button aria-label="뉴스 열기"><svg viewBox="0 0 8 5"><path d="M0 5h8l-4-5z" fill="#fff" /></svg></button></div>
      </div>
      <button v-for="s in sideTabs" :key="s[0]" class="st">{{ s[0] }}<br />{{ s[1] }}</button>
      <button class="st half"><span>자<br />동</span></button>
    </div>

    <footer class="task">
      <button class="start">시작</button>
      <button class="ghost wmp" aria-label="미디어"><svg viewBox="0 0 16 16" v-html="art.wmp"></svg></button>
      <div class="list"><button v-for="(t, i) in tasks" :key="t[1]" :class="{ act: i === 5 }"><svg viewBox="0 0 16 16" v-html="art[t[0]]"></svg><span>{{ t[1] }}</span></button></div>
      <div class="tray"><svg v-for="(t, i) in tray" :key="i" viewBox="0 0 16 16" v-html="art[t]"></svg><time>오전 12:41</time><svg viewBox="0 0 16 16" v-html="art.desk"></svg></div>
      <div class="tray last"><svg viewBox="0 0 16 16" v-html="art.desk"></svg></div>
    </footer>
  </div>
</template>

<style>
html, body { background: #dbdbdb; }
</style>

<style scoped>
.app, .app * { box-sizing: border-box; }
.app { display: flex; flex-direction: column; min-height: 100vh; overflow: hidden; background: #dbdbdb; color: #000; font: 12px/14px "Liberation Sans", "Noto Sans CJK KR", sans-serif; }
button, input, select { margin: 0; padding: 0; font: inherit; color: inherit; border-radius: 0; }
a { color: inherit; text-decoration: none; }
svg { display: block; }
.grow { flex: 1; }
.app :deep(svg text) { font-family: "Liberation Sans", "Noto Sans CJK KR", sans-serif; }

.title { display: flex; align-items: center; height: 18px; padding-right: 2px; background: linear-gradient(90deg, #808080, #bababa 70%, #c0c0c0); color: #d4d0c8; font-size: 14px; white-space: nowrap; }
.caption { display: flex; gap: 17px; }
.title .cap { width: 15px; height: 14px; }
.title .cap.gap { margin-left: 3px; }
.title .cap.far { margin-left: 6px; }
.cap { width: 13px; height: 12px; background: #d4d0c8; border: 1px solid; border-color: #fff #404040 #404040 #fff; display: grid; place-items: center; }
.cap svg { width: 8px; height: 8px; }

.menu { display: flex; align-items: center; gap: 17px; height: 24px; border-bottom: 2px solid #b0b0b0; background: #dcdcdc; font-size: 13px; }

.main-tools { display: flex; align-items: center; gap: 3px; height: 38px; padding: 0 50px 0 0; background: linear-gradient(#fff, #f2f2f2 40%, #d6d6d6 60%, #ddd); border-bottom: 2px solid #4c4c4c; }
.main-tools .bar { width: 2px; height: 32px; border-left: 1px solid #888; border-right: 1px solid #fff; margin: 0 1px; }
.pick { position: relative; display: block; height: 19px; }
.pick select { appearance: none; display: block; width: 100%; height: 100%; padding: 0 0 2px 2px; background: #fff; border: 1px solid; border-color: #555 #ddd #ddd #555; outline: 0; }
.pick svg { position: absolute; right: 7px; top: 7px; width: 8px; height: 5px; fill: #777; pointer-events: none; }
.pick.off select { background: #d4d0c8; color: #8a8a8a; opacity: 1; }
.find { width: 66px; margin-right: 4px; }
.find select { border-color: #bbb; border-radius: 0 5px 5px 0; }
.sq { width: 22px; height: 21px; border: 1px solid #999; background: linear-gradient(#fff, #ddd); border-radius: 2px; display: grid; place-items: center; }
.sq svg { width: 14px; height: 14px; }
.all { display: flex; align-items: center; justify-content: center; gap: 20px; width: 84px; height: 21px; padding-left: 18px; border: 1px solid #2a69a8; border-radius: 4px; background: #3c82c6; color: #fff; font-size: 13px; margin-right: 3px; }
.all svg { width: 8px; height: 5px; }
.new { width: 34px; height: 31px; border: 1px solid #bbb; background: #f0f2f8; display: grid; place-items: center; }
.new svg { width: 24px; height: 24px; }
.quick { width: 34px; height: 32px; border: 1px solid #777; border-radius: 2px; background: #fff; color: #102a4c; font-size: 13px; line-height: 13px; }
.ghost { background: none; border: 0; width: 18px; height: 18px; margin-left: 9px; }
.ghost svg { width: 18px; height: 18px; }
.back { height: 30px; margin: 0 -4px 0 0; }
.back svg { height: 30px; }

.desk { position: relative; flex: 1 0 auto; height: 728px; background: #545b6e; border-right: 2px solid #e4e0da; overflow: hidden; }
.seam { position: absolute; right: 19px; top: 0; bottom: 0; width: 3px; background: linear-gradient(90deg, #fff 1px, #d4d0c8 2px, #444 2px); }
.win { position: absolute; background: #c6c6c6; border: 1px solid #d4d0c8; border-right-color: #404040; border-bottom-color: #404040; box-shadow: inset 1px 1px #fff, inset -1px -1px #808080; }
.rear { left: 15px; right: 75px; top: 3px; bottom: 2px; }
.mid { left: 9px; right: 40px; top: 5px; bottom: 4px; display: flex; flex-direction: column; padding: 2px 1px 2px 2px; }
.mid-head { display: flex; height: 18px; border-bottom: 2px solid #1a2560; padding: 2px 2px 0 0; }
.mid-tab { width: 212px; height: 14px; margin-top: -2px; border: 1px solid #222; border-width: 1px 0 0 1px; border-radius: 0 4px 0 0; }
.mid-body { flex: 1; display: flex; min-height: 0; }
.mid-main { flex: 1; min-width: 0; display: flex; flex-direction: column; justify-content: flex-end; background: #c0c0c0; }
.strip { display: flex; height: 21px; }
.days { flex: 0 0 512px; border-right: 3px double #fff; background: #c0c0c0; }
.days svg { width: 508px; height: 21px; }
.days text { font-size: 12px; text-anchor: middle; }
.strip-r { flex: 1; min-width: 0; border-left: 1px solid #222; }
.clip { height: 5px; overflow: hidden; }
.clip svg { width: 1000px; height: 5px; }
.front { left: 12px; right: 62px; top: 12px; padding: 1px 2px 2px 3px; background: #c8c8c8; }
.tabs { display: flex; align-items: center; height: 19px; gap: 1px; padding-right: 2px; border-bottom: 1px solid #10205c; }
.tab { display: flex; align-items: center; width: 212px; height: 18px; padding: 0 6px; background: linear-gradient(#7ba0d8, #3a5ca4 60%, #2b4a94); border-right: 1px solid #112; border-radius: 0 3px 0 0; color: #fff; font-weight: 700; font-size: 13px; white-space: nowrap; }
.link { width: 14px; height: 9px; margin-left: auto; }
.tab button { width: 10px; height: 10px; margin: 0 2px 0 6px; border: 0; background: none; }
.work { display: flex; }
.col { flex: 1; min-width: 0; }
.ctools { display: flex; align-items: center; gap: 2px; height: 23px; padding: 0 1px; background: #e3e9f6; border-bottom: 1px solid #000; overflow: hidden; }
.sep { width: 2px; height: 20px; margin: 0 1px; border-left: 1px solid #777; border-right: 1px solid #fff; flex: none; }
.b { flex: none; width: 20px; height: 20px; display: grid; place-items: center; background: #f4f4f4; border: 1px solid #bbb; border-right: 2px solid #999; border-bottom: 2px solid #999; font-weight: 700; font-size: 13px; line-height: 16px; overflow: hidden; }
.b svg { width: 15px; height: 15px; }
.b.thin { width: 8px; }
.b.thin svg { width: 6px; height: 10px; }
.b.red { color: #e00; background: #dfeedd; }
.b.wide { width: 34px; }
.w-sym { width: 77px; }
.w-min { width: 45px; }
.w-tick { width: 54px; }
.w-cnt { width: 49px; }
.w-min, .w-tick, .w-sym, .w-cnt { flex: none; }
.cnt { flex: none; width: 65px; height: 19px; padding: 0 2px 3px; text-align: right; border: 1px solid; border-color: #555 #ddd #ddd #555; background: #fff; }
.pane { position: relative; margin: 0; background: #c0c0c0; }
.plot { width: 100%; height: auto; }
.plot text { font-size: 12px; white-space: pre; }
.plot .mid-t { text-anchor: middle; }
.plot text.ax { font-size: 11px; }
.plot text.big { font: 21px "Open Sans", "Noto Sans CJK KR", sans-serif; }
.plot .big .ko { font: 23px "Noto Sans CJK KR", sans-serif; }
figcaption { position: absolute; left: 0; top: 0; display: flex; align-items: center; height: 15px; font-size: 12px; white-space: nowrap; }
figcaption em { width: 22px; height: 14px; overflow: hidden; background: #808080; color: #fff; font-style: normal; font-size: 12px; line-height: 14px; }
figcaption button { width: 10px; height: 14px; border: 1px solid #999; background: #e8e8e8; font-size: 10px; line-height: 10px; font-weight: 700; }
figcaption span { margin-left: 6px; }

.scroll { display: flex; align-items: center; height: 16px; background: #e3e9f6; }
.split { height: 20px; border-bottom: 4px solid #d0cec8; }
.grip { width: 25px; height: 6px; margin: 0 5px; border: 1px solid #888; border-left: 0; border-top-color: #fff; background: linear-gradient(#fff 2px, #888 2px, #888 3px, #fff 3px); }
.arr { flex: none; width: 16px; height: 16px; padding: 0; background: #e3e9f6; border: 1px solid; border-color: #d4d0c8 #555 #555 #d4d0c8; display: grid; place-items: center; }
.arr svg { width: 8px; height: 8px; }
.track { flex: 1; height: 16px; background: repeating-conic-gradient(#fff 0 25%, #dbe5f5 0 50%) 0 0 / 2px 2px; }
.slide { flex: none; width: 62px; height: 16px; margin: 0 5px; background: linear-gradient(#222, #222) 2px 13px / 1px 3px no-repeat, linear-gradient(#222, #222) 31px 13px / 1px 3px no-repeat, linear-gradient(#222, #222) 59px 13px / 1px 3px no-repeat; }
.slide input { appearance: none; display: block; width: 62px; height: 12px; background: linear-gradient(#808080, #808080) 0 5px / 100% 2px no-repeat; }
.slide input::-webkit-slider-thumb { appearance: none; width: 5px; height: 10px; background: #e3e9f6; border: 1px solid; border-color: #fff #777 #777 #fff; }
.num { flex: none; width: 54px; height: 16px; padding: 0 1px; border: 1px solid #000; background: #fff; text-align: right; font-size: 12px; }
.zi { flex: none; width: 18px; height: 16px; border: 0; background: none; padding: 0 1px; }
.zi svg { width: 16px; height: 16px; }

.rail { flex: 0 0 27px; height: 628px; padding-bottom: 12px; position: relative; border-left: 1px solid #fff; background: #e3e9f6; }
.cells { height: 616px; overflow: hidden; }
.cell { display: block; height: 25px; padding: 3px 0 0 4px; }
.cell button { display: block; width: 18px; height: 18px; background: #d4d0c8; border: 1px solid; border-color: #888 #555 #555 #888; padding: 0; box-shadow: inset 1px 1px #fff; }
.cell svg { width: 16px; height: 16px; }
.cell.on { border: 1px solid; border-color: #888 #fff #fff #888; padding: 3px 0 0 3px; background: repeating-conic-gradient(#fff 0 25%, #d8d8d8 0 50%) 0 0 / 2px 2px; }
.cell.on button { background: #f0f0f0; }
.more { position: absolute; right: 4px; bottom: 2px; }
.more svg { width: 7px; height: 9px; }
.back-rail { height: auto; padding-bottom: 12px; }
.back-rail .cells { height: 664px; }
.status { height: 18px; background: #d4d0c8; border: 2px solid; border-color: #777 #eee #eee #777; box-shadow: inset 1px 1px #fff, 0 1px #aaa; }

.sheets { display: flex; gap: 1px; height: 26px; padding-top: 1px; border-top: 1px solid #fff; }
.sheets button { width: 59px; height: 20px; border: 1px solid #aaa; border-bottom: 0; background: linear-gradient(#f8f8f8 50%, #e6e6e6 50%); font-size: 13px; line-height: 17px; }
.sheets .first { margin-left: -10px; }
.foot { display: flex; gap: 2px; height: 39px; padding-right: 5px; }
.boxes { flex: 1; display: grid; grid-template-columns: 497fr 493fr 493fr; grid-auto-rows: 17px; gap: 1px 2px; height: 35px; margin-right: 2px; }
.boxes > div { border: 1px solid #666; background: #fbfbfb; min-width: 0; }
.news { display: flex; align-items: center; justify-content: space-between; padding: 0 1px 0 2px; white-space: nowrap; }
.news span { overflow: hidden; font-size: 13px; line-height: 15px; }
.news button { flex: none; width: 15px; height: 13px; border: 1px solid #38b; background: #6bc4f0; display: grid; place-items: center; }
.news button svg { width: 8px; height: 5px; }
.st { flex: none; width: 26px; height: 35px; border: 1px solid #fff; background: linear-gradient(#e2e2e6, #fbfbfb 40%, #e4e4e4); color: #555; font-size: 13px; line-height: 14px; font-weight: 500; position: relative; }
.st::after { content: ""; position: absolute; right: 1px; top: 2px; border: 3px solid; border-color: #888 #888 transparent transparent; }
.half { width: 16px; margin-left: 4px; overflow: hidden; }
.half span { display: block; margin-left: -6px; }

.task { display: flex; align-items: center; height: 27px; padding: 0 2px 0 0; background: #d4d0c8; border-top: 1px solid #fff; }
.start { width: 30px; height: 22px; font-weight: 700; font-size: 13px; background: #d4d0c8; border: 1px solid; border-color: #fff #404040 #404040 #fff; border-left: 0; }
.wmp { width: 16px; height: 16px; margin: 0 10px 0 17px; }
.wmp svg { width: 16px; height: 16px; }
.list { flex: 1; min-width: 0; display: grid; grid-template-columns: repeat(8, 1fr); gap: 2px; }
.list button { display: flex; align-items: center; gap: 4px; min-width: 0; height: 22px; padding: 0 4px; background: #d4d0c8; border: 1px solid; border-color: #fff #404040 #404040 #fff; box-shadow: inset -1px -1px #808080; white-space: pre; overflow: hidden; }
.list svg { flex: none; width: 16px; height: 16px; }
.list .act { background: #fff; border-color: #404040 #fff #fff #404040; box-shadow: inset 1px 1px #808080; font-weight: 700; }
.tray { display: flex; align-items: center; justify-content: space-between; width: 430px; height: 22px; margin-left: 4px; padding: 0 1px 0 6px; border: 1px solid; border-color: #808080 #fff #fff #808080; }
.tray svg { flex: none; width: 16px; height: 16px; }
.tray time { margin: 0 0 0 6px; white-space: nowrap; }
.last { width: 19px; margin-left: 2px; padding: 0; justify-content: center; border-left: 0; }
</style>
